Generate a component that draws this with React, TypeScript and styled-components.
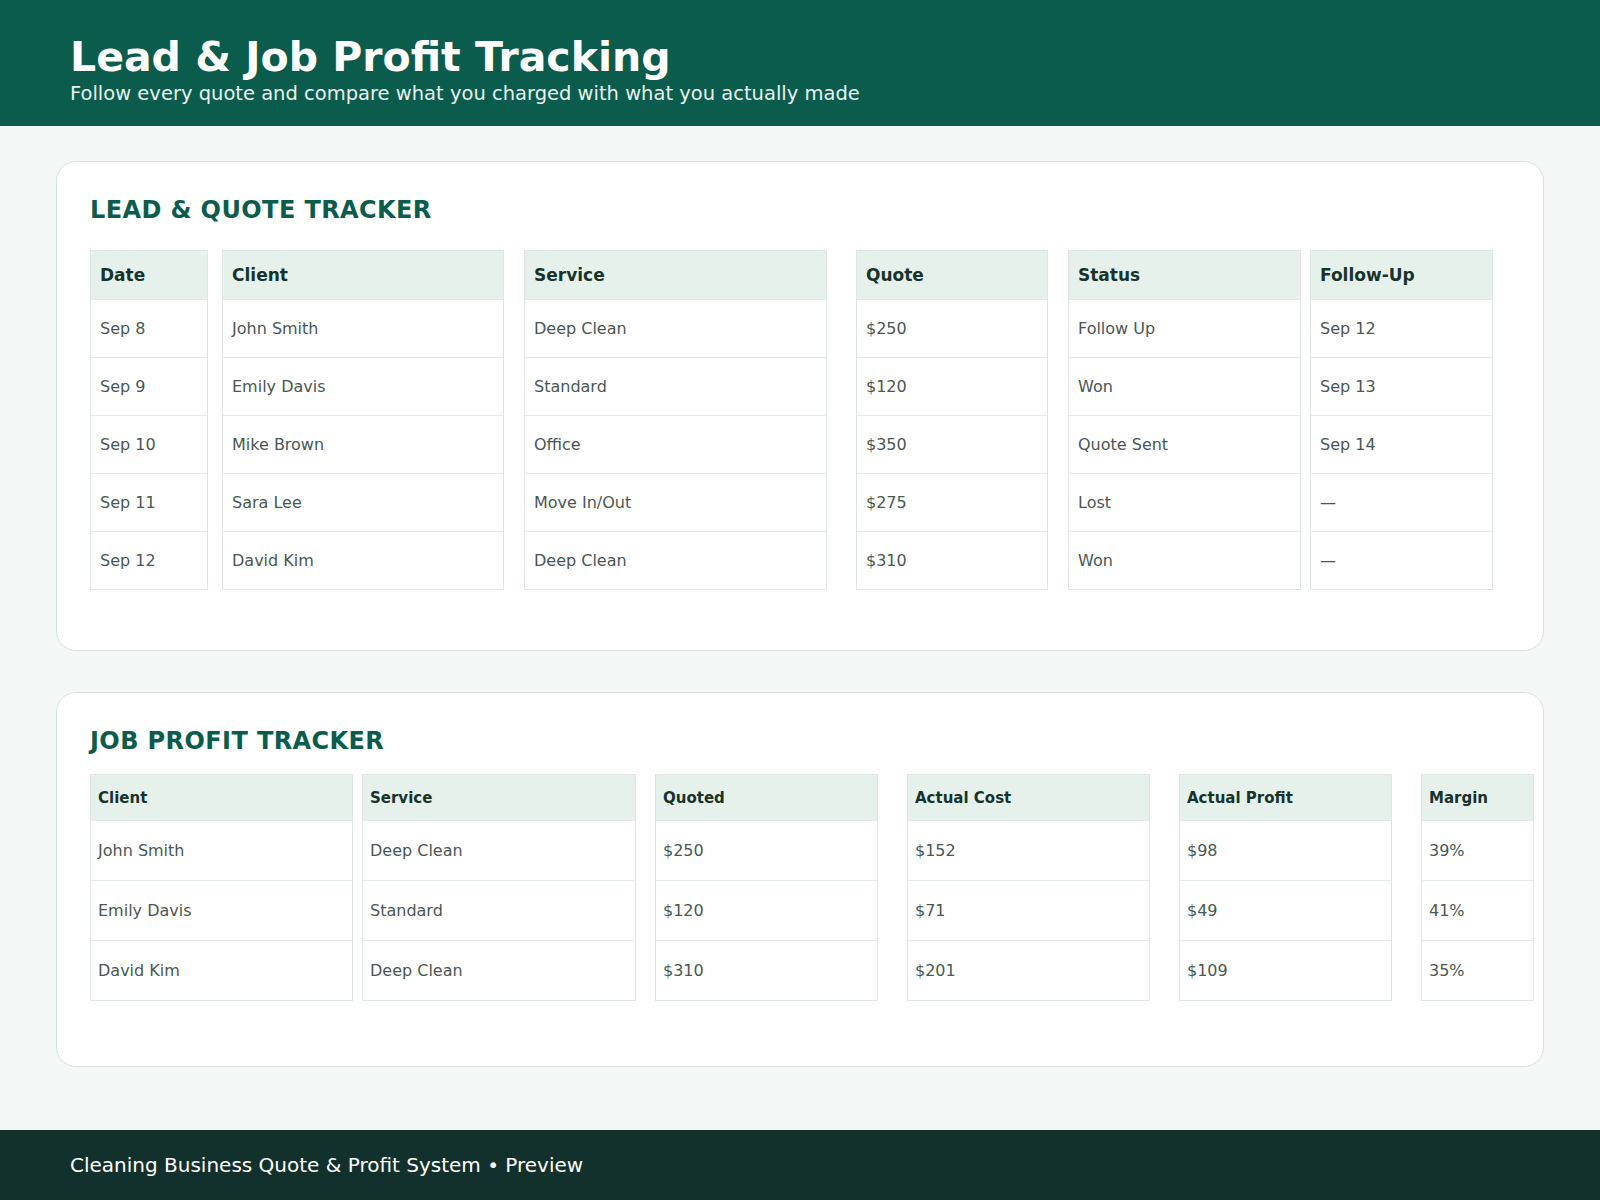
import React from 'react'
import styled, { createGlobalStyle } from 'styled-components'

const Global = createGlobalStyle`
  body { margin: 0; background: #f3f7f5; font-family: "DejaVu Sans", "Noto Sans", sans-serif; }
`

const Page = styled.div`
  min-height: 1200px;
  display: flex;
  flex-direction: column;
`

const Header = styled.header`
  background: #0b5c4c;
  height: 126px;
  box-sizing: border-box;
  padding: 33px 70px 0;
  color: #fff;
`

const Title = styled.h1`
  margin: 0;
  font-size: 41px;
  font-weight: 700;
  line-height: 48px;
`

const Subtitle = styled.div`
  font-size: 19.5px;
  margin-top: 1px;
  color: #e6f2ee;
`

const Main = styled.main`
  flex: 1;
  padding: 35px 56px 0;
  display: flex;
  flex-direction: column;
  gap: 41px;
`

const Card = styled.section<{ $h: number; $pt: number }>`
  background: #fff;
  border: 1.5px solid #d5e2dd;
  border-radius: 20px;
  height: ${({ $h }) => $h}px;
  box-sizing: border-box;
  padding: ${({ $pt }) => $pt}px 33px 0;
`

const SectionTitle = styled.h2<{ $mb: number }>`
  margin: 0 0 ${({ $mb }) => $mb}px;
  font-size: 24px;
  font-weight: 700;
  color: #0b5c4b;
  letter-spacing: 0.4px;
`

const Columns = styled.div`
  display: flex;
`

const Column = styled.div<{ $w: number; $gap: number }>`
  width: ${({ $w }) => $w}px;
  margin-right: ${({ $gap }) => $gap}px;
  border: 1px solid #dfe7e4;
  display: flex;
  flex-direction: column;
  flex-shrink: 0;
`

const HeadCell = styled.div<{ $h: number; $fs: number; $pl: number }>`
  height: ${({ $h }) => $h}px;
  background: #e6f1ec;
  display: flex;
  align-items: center;
  padding-left: ${({ $pl }) => $pl}px;
  font-size: ${({ $fs }) => $fs}px;
  font-weight: 700;
  color: #17332c;
`

const Cell = styled.div<{ $h: number; $pl: number }>`
  height: ${({ $h }) => $h}px;
  border-top: 1px solid #e3eae7;
  display: flex;
  align-items: center;
  padding-left: ${({ $pl }) => $pl}px;
  font-size: 16px;
  color: #4a5753;
`

const Footer = styled.footer`
  background: #12312c;
  height: 70px;
  display: flex;
  align-items: center;
  padding-left: 70px;
  color: #fff;
  font-size: 20px;
`

const leads = [
  { h: 'Date', w: 116, g: 14, v: ['Sep 8', 'Sep 9', 'Sep 10', 'Sep 11', 'Sep 12'] },
  { h: 'Client', w: 280, g: 20, v: ['John Smith', 'Emily Davis', 'Mike Brown', 'Sara Lee', 'David Kim'] },
  { h: 'Service', w: 301, g: 29, v: ['Deep Clean', 'Standard', 'Office', 'Move In/Out', 'Deep Clean'] },
  { h: 'Quote', w: 190, g: 20, v: ['$250', '$120', '$350', '$275', '$310'] },
  { h: 'Status', w: 231, g: 9, v: ['Follow Up', 'Won', 'Quote Sent', 'Lost', 'Won'] },
  { h: 'Follow-Up', w: 181, g: 0, v: ['Sep 12', 'Sep 13', 'Sep 14', '—', '—'] },
]

const jobs = [
  { h: 'Client', w: 261, g: 9, v: ['John Smith', 'Emily Davis', 'David Kim'] },
  { h: 'Service', w: 272, g: 19, v: ['Deep Clean', 'Standard', 'Deep Clean'] },
  { h: 'Quoted', w: 221, g: 29, v: ['$250', '$120', '$310'] },
  { h: 'Actual Cost', w: 241, g: 29, v: ['$152', '$71', '$201'] },
  { h: 'Actual Profit', w: 211, g: 29, v: ['$98', '$49', '$109'] },
  { h: 'Margin', w: 111, g: 0, v: ['39%', '41%', '35%'] },
]

export default function App() {
  return (
    <Page>
      <Global />
      <Header>
        <Title>Lead &amp; Job Profit Tracking</Title>
        <Subtitle>Follow every quote and compare what you charged with what you actually made</Subtitle>
      </Header>
      <Main>
        <Card $h={490} $pt={34}>
          <SectionTitle $mb={26}>LEAD &amp; QUOTE TRACKER</SectionTitle>
          <Columns>
            {leads.map((c) => (
              <Column key={c.h} $w={c.w} $gap={c.g}>
                <HeadCell $h={48} $fs={17} $pl={9}>{c.h}</HeadCell>
                {c.v.map((v, i) => (
                  <Cell key={i} $h={57} $pl={9}>{v}</Cell>
                ))}
              </Column>
            ))}
          </Columns>
        </Card>
        <Card $h={375} $pt={34}>
          <SectionTitle $mb={19}>JOB PROFIT TRACKER</SectionTitle>
          <Columns>
            {jobs.map((c) => (
              <Column key={c.h} $w={c.w} $gap={c.g}>
                <HeadCell $h={45} $fs={15} $pl={7}>{c.h}</HeadCell>
                {c.v.map((v, i) => (
                  <Cell key={i} $h={59} $pl={7}>{v}</Cell>
                ))}
              </Column>
            ))}
          </Columns>
        </Card>
      </Main>
      <Footer>Cleaning Business Quote &amp; Profit System • Preview</Footer>
    </Page>
  )
}
